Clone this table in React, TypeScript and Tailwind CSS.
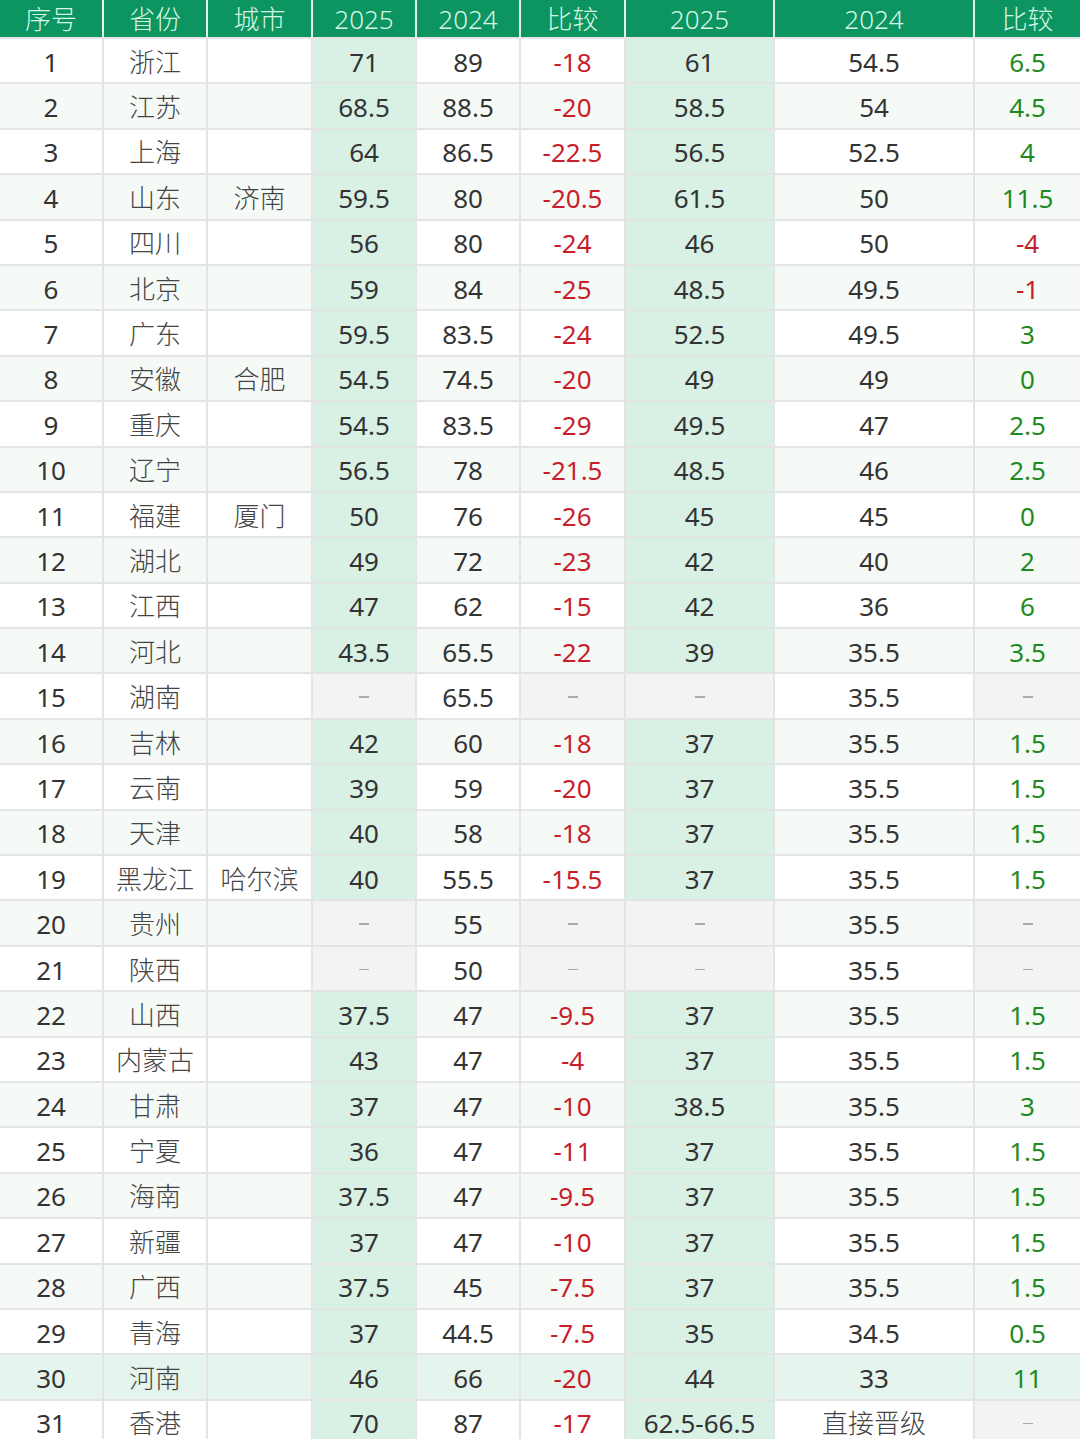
type Row = [number, string, string, string, string, string, string, string, string]

const rows: Row[] = [
  [1, "浙江", "", "71", "89", "-18", "61", "54.5", "6.5"],
  [2, "江苏", "", "68.5", "88.5", "-20", "58.5", "54", "4.5"],
  [3, "上海", "", "64", "86.5", "-22.5", "56.5", "52.5", "4"],
  [4, "山东", "济南", "59.5", "80", "-20.5", "61.5", "50", "11.5"],
  [5, "四川", "", "56", "80", "-24", "46", "50", "-4"],
  [6, "北京", "", "59", "84", "-25", "48.5", "49.5", "-1"],
  [7, "广东", "", "59.5", "83.5", "-24", "52.5", "49.5", "3"],
  [8, "安徽", "合肥", "54.5", "74.5", "-20", "49", "49", "0"],
  [9, "重庆", "", "54.5", "83.5", "-29", "49.5", "47", "2.5"],
  [10, "辽宁", "", "56.5", "78", "-21.5", "48.5", "46", "2.5"],
  [11, "福建", "厦门", "50", "76", "-26", "45", "45", "0"],
  [12, "湖北", "", "49", "72", "-23", "42", "40", "2"],
  [13, "江西", "", "47", "62", "-15", "42", "36", "6"],
  [14, "河北", "", "43.5", "65.5", "-22", "39", "35.5", "3.5"],
  [15, "湖南", "", "-", "65.5", "-", "-", "35.5", "-"],
  [16, "吉林", "", "42", "60", "-18", "37", "35.5", "1.5"],
  [17, "云南", "", "39", "59", "-20", "37", "35.5", "1.5"],
  [18, "天津", "", "40", "58", "-18", "37", "35.5", "1.5"],
  [19, "黑龙江", "哈尔滨", "40", "55.5", "-15.5", "37", "35.5", "1.5"],
  [20, "贵州", "", "-", "55", "-", "-", "35.5", "-"],
  [21, "陕西", "", "-", "50", "-", "-", "35.5", "-"],
  [22, "山西", "", "37.5", "47", "-9.5", "37", "35.5", "1.5"],
  [23, "内蒙古", "", "43", "47", "-4", "37", "35.5", "1.5"],
  [24, "甘肃", "", "37", "47", "-10", "38.5", "35.5", "3"],
  [25, "宁夏", "", "36", "47", "-11", "37", "35.5", "1.5"],
  [26, "海南", "", "37.5", "47", "-9.5", "37", "35.5", "1.5"],
  [27, "新疆", "", "37", "47", "-10", "37", "35.5", "1.5"],
  [28, "广西", "", "37.5", "45", "-7.5", "37", "35.5", "1.5"],
  [29, "青海", "", "37", "44.5", "-7.5", "35", "34.5", "0.5"],
  [30, "河南", "", "46", "66", "-20", "44", "33", "11"],
  [31, "香港", "", "70", "87", "-17", "62.5-66.5", "直接晋级", "-"],
]

const heads = ["序号", "省份", "城市", "2025", "2024", "比较", "2025", "2024", "比较"]

const font = { fontFamily: '"Noto Sans", "Noto Sans CJK SC", sans-serif' }

export default function App() {
  return (
    <div className="w-[1080px] h-[1439px] overflow-hidden bg-[#e3e4e3]" style={font}>
      <div className="grid grid-cols-[102px_102px_103px_102px_102px_103px_147px_198px_105px] gap-x-[2px] bg-[#dff5ea]">
        {heads.map((h, i) => (
          <div key={i} className="h-[37px] bg-[#0c9461] flex items-center justify-center text-[26px] leading-none text-[#d6f7e4] font-light">
            {h}
          </div>
        ))}
      </div>
      <div className="mt-[2px] grid grid-cols-[102px_102px_103px_102px_102px_103px_147px_198px_105px] auto-rows-[43.4px] gap-[2px]">
        {rows.map((r) => {
          const striped = r[0] === 30 ? "bg-[#e5f4ec]" : r[0] % 2 === 0 ? "bg-[#f5faf7]" : "bg-white"
          return r.map((v, ci) => {
            const s = String(v)
            const dash = s === "-"
            let bg = striped
            if (ci === 3 || ci === 6) bg = "bg-[#d9f0e5]"
            if (dash) bg = "bg-[#f2f3f2]"
            let color = "text-[#333]"
            if (ci === 1 || ci === 2 || s === "直接晋级") color = "text-[#444] font-light"
            if (ci === 5 && !dash) color = "text-[#c81e2c]"
            if (ci === 8 && !dash) color = s.startsWith("-") ? "text-[#c81e2c]" : "text-[#1f8a22]"
            return (
              <div key={`${r[0]}-${ci}`} className={`${bg} flex items-center justify-center pt-[2px] text-[26px] leading-none whitespace-nowrap`}>
                {dash ? (
                  <span className="block w-[10px] h-[1.5px] bg-[#a9aaa9]" />
                ) : (
                  <span className={color}>{s}</span>
                )}
              </div>
            )
          })
        })}
      </div>
    </div>
  )
}
